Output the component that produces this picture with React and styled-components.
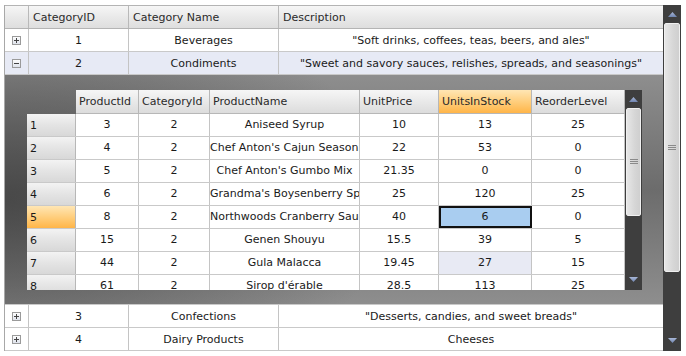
import React from "react";
import styled, { createGlobalStyle, css } from "styled-components";

const GlobalStyle = createGlobalStyle`
  html, body {
    margin: 0;
    padding: 0;
    background: #fff;
  }
  body {
    font-family: "DejaVu Sans", Verdana, sans-serif;
    font-size: 11px;
    color: #1a1a1a;
  }
`;

const Page = styled.div`
  width: 686px;
  height: 356px;
  padding: 5px 5px 0 4px;
  box-sizing: border-box;
  overflow: hidden;
`;

const Grid = styled.div`
  display: flex;
  height: 346px;
`;

const Table = styled.div`
  flex: 1;
  display: flex;
  flex-direction: column;
  border-left: 1px solid #a8a8a8;
  min-width: 0;
`;

const outerCols = "24px 100px 150px 1fr";

const HeaderRow = styled.div`
  display: grid;
  grid-template-columns: ${outerCols};
  height: 24px;
  box-sizing: border-box;
  border-top: 1px solid #b4b4b4;
  border-bottom: 1px solid #b4b4b4;
  background: linear-gradient(#f6f6f6, #e9e9e9 50%, #dedede);
`;

const HeaderCell = styled.div`
  display: flex;
  align-items: center;
  padding-left: 4px;
  border-right: 1px solid #b9b9b9;
  color: #2a2a2a;
  white-space: nowrap;
  &:last-child {
    border-right: none;
  }
`;

const Row = styled.div`
  display: grid;
  grid-template-columns: ${outerCols};
  height: 23px;
  box-sizing: border-box;
  border-bottom: 1px solid #c9c9c9;
  background: ${(p) => (p.$active ? "#e7eaf5" : "#fff")};
`;

const Cell = styled.div`
  display: flex;
  align-items: center;
  justify-content: center;
  border-right: 1px solid #c4c4c4;
  white-space: nowrap;
  overflow: hidden;
  &:last-child {
    border-right: none;
  }
`;

const Expander = styled.span`
  width: 7px;
  height: 7px;
  border: 1px solid #9a9a9a;
  background: linear-gradient(#fdfdfd, #dfe3ec);
  position: relative;
  &::before {
    content: "";
    position: absolute;
    left: 1px;
    right: 1px;
    top: 3px;
    height: 1px;
    background: #444;
  }
  ${(p) =>
    !p.$open &&
    css`
      &::after {
        content: "";
        position: absolute;
        top: 1px;
        bottom: 1px;
        left: 3px;
        width: 1px;
        background: #444;
      }
    `}
`;

const Detail = styled.div`
  height: 230px;
  box-sizing: border-box;
  padding: 15px 21px 15px 22px;
  border-bottom: 1px solid #c9c9c9;
  background:
    radial-gradient(ellipse 60% 90% at 0% 55%, rgba(60, 60, 60, 0.75), rgba(60, 60, 60, 0) 100%),
    linear-gradient(#8e8e8e, #6c6c6c 50%, #8e8e8e);
  display: flex;
`;

const Inner = styled.div`
  flex: 1;
  display: flex;
  height: 200px;
`;

const InnerTable = styled.div`
  flex: 1;
  display: flex;
  flex-direction: column;
  overflow: hidden;
`;

const innerCols = "49px 63px 71px 150px 79px 93px 93px";

const InnerHeader = styled.div`
  display: grid;
  grid-template-columns: ${innerCols};
  height: 24px;
  flex-shrink: 0;
`;

const InnerHeadCell = styled.div`
  display: flex;
  align-items: center;
  padding-left: 3px;
  box-sizing: border-box;
  white-space: nowrap;
  overflow: hidden;
  border-right: 1px solid #b7b7b7;
  border-bottom: 1px solid #b7b7b7;
  color: #2a2a2a;
  background: ${(p) =>
    p.$hot
      ? "linear-gradient(#ffe6b4, #ffcc78 55%, #ffb548)"
      : "linear-gradient(#f6f6f6, #e9e9e9 50%, #dcdcdc)"};
  &:first-child {
    background: transparent;
    border: none;
  }
`;

const InnerRow = styled.div`
  display: grid;
  grid-template-columns: ${innerCols};
  height: 23px;
  flex-shrink: 0;
  box-sizing: border-box;
  border-bottom: 1px solid #c9c9c9;
  background: #fff;
`;

const RowHead = styled.div`
  display: flex;
  align-items: center;
  padding-left: 3px;
  border-right: 1px solid #b7b7b7;
  background: ${(p) =>
    p.$hot
      ? "linear-gradient(#ffe6b4, #ffcc78 55%, #ffb548)"
      : "linear-gradient(#f3f3f3, #e4e4e4 50%, #d8d8d8)"};
`;

const InnerCell = styled.div`
  display: block;
  line-height: 22px;
  text-align: center;
  white-space: nowrap;
  overflow: hidden;
  border-right: 1px solid #c4c4c4;
  box-sizing: border-box;
  background: ${(p) =>
    p.$selected ? "#a9cdf0" : p.$hover ? "#e8eaf4" : "transparent"};
  ${(p) =>
    p.$selected &&
    css`
      outline: 2px solid #111;
      outline-offset: -2px;
    `}
`;

const ScrollBar = styled.div`
  width: ${(p) => p.$w}px;
  flex-shrink: 0;
  background: #3e3e3e;
  display: flex;
  flex-direction: column;
  align-items: center;
`;

const Arrow = styled.div`
  height: ${(p) => p.$h}px;
  width: 100%;
  display: flex;
  justify-content: center;
  align-items: center;
  flex-shrink: 0;
`;

const Thumb = styled.div`
  width: ${(p) => p.$w}px;
  height: ${(p) => p.$h}px;
  border-radius: 2px;
  border: 1px solid #f0f0f0;
  box-sizing: border-box;
  background: linear-gradient(90deg, #e6e6e6, #d6d6d6 60%, #cfcfcf);
  display: flex;
  justify-content: center;
  align-items: center;
`;

const Spacer = styled.div`
  flex: 1;
`;

const Grip = () => (
  <svg width="8" height="6" viewBox="0 0 8 6">
    <path d="M0 0.5H8M0 2.5H8M0 4.5H8" stroke="#8a8a8a" strokeWidth="1" />
  </svg>
);

const Tri = ({ down }) => (
  <svg width="9" height="5" viewBox="0 0 9 5">
    <defs>
      <linearGradient id={down ? "td" : "tu"} x1="0" y1="0" x2="0" y2="1">
        <stop offset="0" stopColor="#a9b8d8" />
        <stop offset="1" stopColor="#6f84b0" />
      </linearGradient>
    </defs>
    <path
      d={down ? "M0 0H9L4.5 5Z" : "M4.5 0L9 5H0Z"}
      fill={`url(#${down ? "td" : "tu"})`}
    />
  </svg>
);

const categories = [
  [1, "Beverages", '"Soft drinks, coffees, teas, beers, and ales"'],
  [2, "Condiments", '"Sweet and savory sauces, relishes, spreads, and seasonings"'],
  [3, "Confections", '"Desserts, candies, and sweet breads"'],
  [4, "Dairy Products", "Cheeses"],
];

const products = [
  [3, 2, "Aniseed Syrup", "10", 13, 25],
  [4, 2, "Chef Anton's Cajun Seasoning", "22", 53, 0],
  [5, 2, "Chef Anton's Gumbo Mix", "21.35", 0, 0],
  [6, 2, "Grandma's Boysenberry Spread", "25", 120, 25],
  [8, 2, "Northwoods Cranberry Sauce", "40", 6, 0],
  [15, 2, "Genen Shouyu", "15.5", 39, 5],
  [44, 2, "Gula Malacca", "19.45", 27, 15],
  [61, 2, "Sirop d'érable", "28.5", 113, 25],
];

const CategoryRow = ({ c, open }) => (
  <Row $active={open}>
    <Cell>
      <Expander $open={open} />
    </Cell>
    <Cell>{c[0]}</Cell>
    <Cell>{c[1]}</Cell>
    <Cell>{c[2]}</Cell>
  </Row>
);

const ProductGrid = () => (
  <Inner>
    <InnerTable>
      <InnerHeader>
        <InnerHeadCell />
        <InnerHeadCell>ProductId</InnerHeadCell>
        <InnerHeadCell>CategoryId</InnerHeadCell>
        <InnerHeadCell>ProductName</InnerHeadCell>
        <InnerHeadCell>UnitPrice</InnerHeadCell>
        <InnerHeadCell $hot>UnitsInStock</InnerHeadCell>
        <InnerHeadCell>ReorderLevel</InnerHeadCell>
      </InnerHeader>
      {products.map((p, i) => (
        <InnerRow key={i}>
          <RowHead $hot={i === 4}>{i + 1}</RowHead>
          <InnerCell>{p[0]}</InnerCell>
          <InnerCell>{p[1]}</InnerCell>
          <InnerCell>{p[2]}</InnerCell>
          <InnerCell>{p[3]}</InnerCell>
          <InnerCell $selected={i === 4} $hover={i === 6}>
            {p[4]}
          </InnerCell>
          <InnerCell>{p[5]}</InnerCell>
        </InnerRow>
      ))}
    </InnerTable>
    <ScrollBar $w={17}>
      <Arrow $h={18}>
        <Tri />
      </Arrow>
      <Thumb $w={15} $h={108}>
        <Grip />
      </Thumb>
      <Spacer />
      <Arrow $h={22}>
        <Tri down />
      </Arrow>
    </ScrollBar>
  </Inner>
);

export default function App() {
  return (
    <>
      <GlobalStyle />
      <Page>
        <Grid>
          <Table>
            <HeaderRow>
              <HeaderCell />
              <HeaderCell>CategoryID</HeaderCell>
              <HeaderCell>Category Name</HeaderCell>
              <HeaderCell>Description</HeaderCell>
            </HeaderRow>
            <CategoryRow c={categories[0]} />
            <CategoryRow c={categories[1]} open />
            <Detail>
              <ProductGrid />
            </Detail>
            <CategoryRow c={categories[2]} />
            <CategoryRow c={categories[3]} />
          </Table>
          <ScrollBar $w={18}>
            <Arrow $h={18}>
              <Tri />
            </Arrow>
            <Thumb $w={16} $h={249}>
              <Grip />
            </Thumb>
            <Spacer />
            <Arrow $h={22}>
              <Tri down />
            </Arrow>
          </ScrollBar>
        </Grid>
      </Page>
    </>
  );
}
